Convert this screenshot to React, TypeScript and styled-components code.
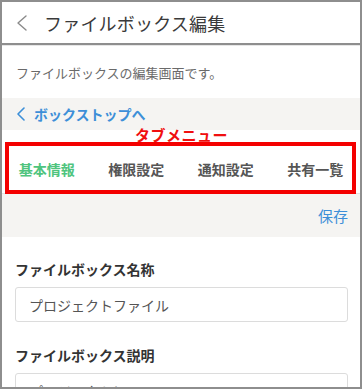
import React from 'react'
import styled, { createGlobalStyle } from 'styled-components'

const GlobalStyle = createGlobalStyle`
  html, body {
    margin: 0;
    padding: 0;
    background: #ffffff;
  }
  body {
    font-family: "Noto Sans CJK JP", "Noto Sans", sans-serif;
  }
`

const Frame = styled.div`
  position: relative;
  width: 362px;
  height: 389px;
  box-sizing: border-box;
  border: 2px solid #8e8e8e;
  overflow: hidden;
  background: #ffffff;
  display: flex;
  flex-direction: column;
`

const Header = styled.header`
  height: 41px;
  flex-shrink: 0;
  display: flex;
  align-items: center;
  padding-left: 15px;
  gap: 17px;
  border-bottom: 2px solid #8e8e8e;
`

const Title = styled.h1`
  margin: 0;
  font-size: 18px;
  font-weight: 400;
  color: #3a3a3a;
  letter-spacing: 0.2px;
`

const Description = styled.p`
  margin: 0;
  height: 53px;
  flex-shrink: 0;
  display: flex;
  align-items: center;
  padding-left: 14px;
  font-size: 13px;
  color: #6a6a6a;
  border-top: 1px solid #e6e6e6;
  box-sizing: border-box;
`

const BackBar = styled.div`
  height: 32px;
  flex-shrink: 0;
  display: flex;
  align-items: center;
  gap: 9px;
  padding-left: 15px;
  background: #f5f4f2;
`

const BackLink = styled.a`
  font-size: 14px;
  font-weight: 700;
  color: #3d8fd8;
  text-decoration: none;
`

const TabSection = styled.div`
  position: relative;
  height: 64px;
  flex-shrink: 0;
  display: flex;
  align-items: flex-end;
  border-bottom: 1px solid #e4e4e4;
  box-sizing: border-box;
`

const TabList = styled.nav`
  width: 100%;
  height: 44px;
  display: grid;
  grid-template-columns: repeat(4, 1fr);
  padding-bottom: 2px;
`

const Tab = styled.button<{ $active?: boolean }>`
  border: none;
  background: none;
  padding: 0;
  font-family: inherit;
  font-size: 14px;
  font-weight: 700;
  color: ${p => (p.$active ? '#4fc47e' : '#555555')};
`

const NoteLabel = styled.span`
  position: absolute;
  top: -6px;
  left: 133px;
  font-size: 15px;
  font-weight: 700;
  color: #f01010;
  letter-spacing: 0.5px;
`

const NoteBox = styled.div`
  position: absolute;
  left: 3px;
  right: 4px;
  top: 12px;
  height: 52px;
  box-sizing: border-box;
  border: 4px solid #f40000;
  pointer-events: none;
`

const SaveBar = styled.div`
  height: 43px;
  flex-shrink: 0;
  display: flex;
  align-items: center;
  justify-content: flex-end;
  padding-right: 12px;
  background: #f5f4f2;
`

const SaveButton = styled.button`
  border: none;
  background: none;
  padding: 0;
  font-family: inherit;
  font-size: 15px;
  color: #3d8fd8;
`

const Form = styled.form`
  display: flex;
  flex-direction: column;
  padding: 22px 12px 0 13px;
`

const Field = styled.div`
  display: flex;
  flex-direction: column;
  gap: 8px;
  margin-bottom: 23px;
`

const Label = styled.label`
  font-size: 14px;
  font-weight: 700;
  color: #333333;
  line-height: 20px;
`

const Input = styled.div`
  height: 35px;
  box-sizing: border-box;
  border: 1px solid #dcdcdc;
  border-radius: 3px;
  display: flex;
  align-items: center;
  padding-left: 13px;
  font-size: 14px;
  color: #555555;
`

const Chevron: React.FC<{ color: string; w: number; h: number; sw: number }> = ({ color, w, h, sw }) => (
  <svg width={w} height={h} viewBox={`0 0 ${w} ${h}`} fill="none">
    <polyline
      points={`${w - 1},1 1,${h / 2} ${w - 1},${h - 1}`}
      stroke={color}
      strokeWidth={sw}
      strokeLinecap="round"
      strokeLinejoin="round"
    />
  </svg>
)

const tabs = ['基本情報', '権限設定', '通知設定', '共有一覧']

export default function App() {
  return (
    <>
      <GlobalStyle />
      <Frame>
        <Header>
          <Chevron color="#8a8a8a" w={10} h={16} sw={1.4} />
          <Title>ファイルボックス編集</Title>
        </Header>
        <Description>ファイルボックスの編集画面です。</Description>
        <BackBar>
          <Chevron color="#3d8fd8" w={8} h={14} sw={1.6} />
          <BackLink href="#">ボックストップへ</BackLink>
        </BackBar>
        <TabSection>
          <TabList>
            {tabs.map((t, i) => (
              <Tab key={t} $active={i === 0}>{t}</Tab>
            ))}
          </TabList>
          <NoteLabel>タブメニュー</NoteLabel>
          <NoteBox />
        </TabSection>
        <SaveBar>
          <SaveButton type="button">保存</SaveButton>
        </SaveBar>
        <Form>
          <Field>
            <Label>ファイルボックス名称</Label>
            <Input>プロジェクトファイル</Input>
          </Field>
          <Field>
            <Label>ファイルボックス説明</Label>
            <Input>プロジェクトについて</Input>
          </Field>
        </Form>
      </Frame>
    </>
  )
}
